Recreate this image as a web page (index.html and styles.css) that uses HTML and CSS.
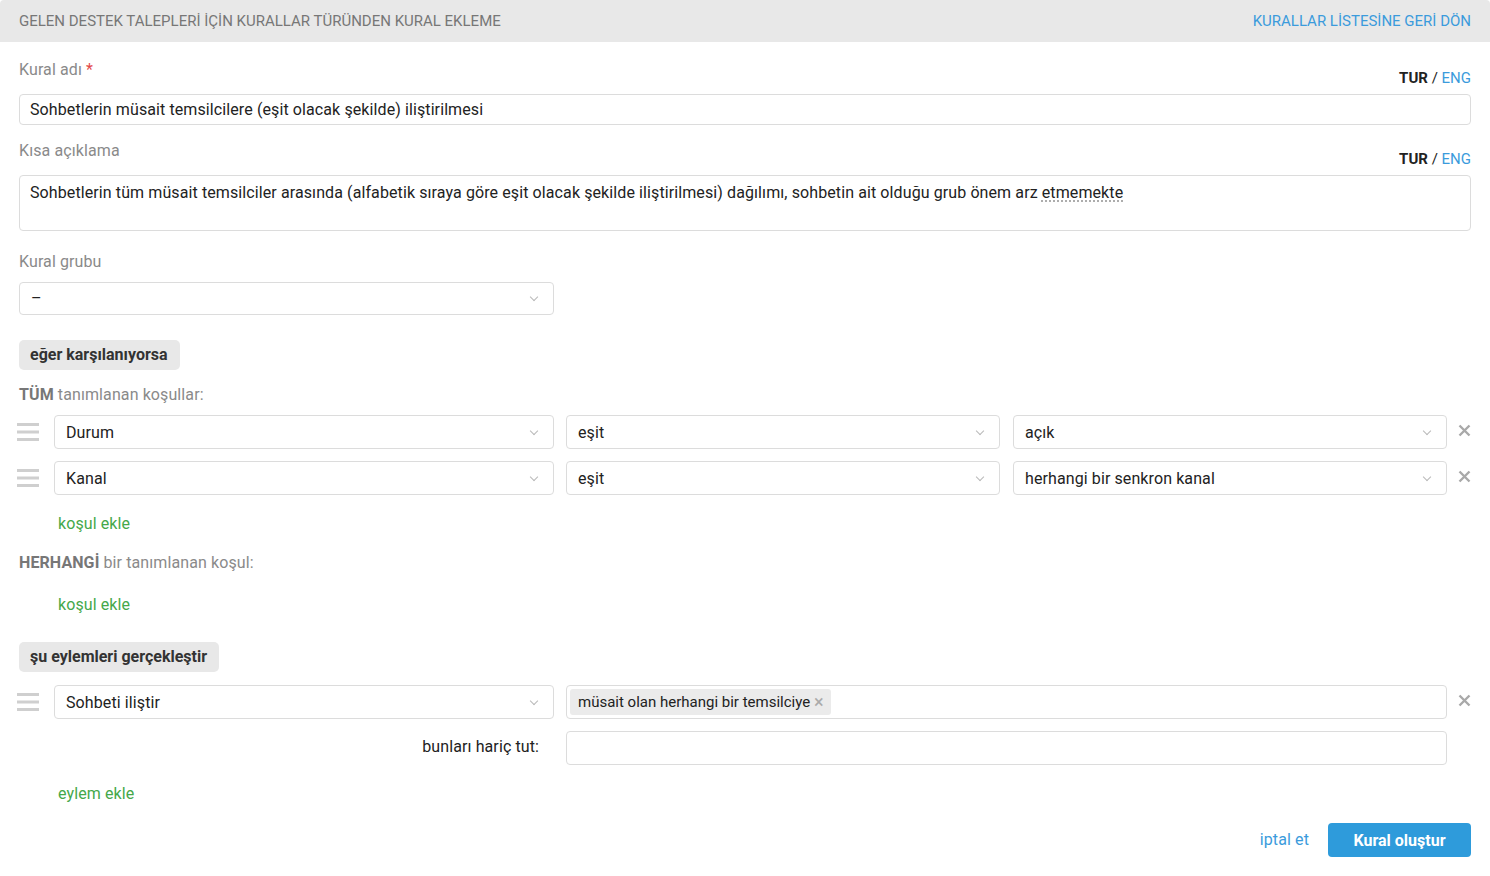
FILE: index.html
```html
<!DOCTYPE html>
<html lang="tr">
<head>
    <meta charset="UTF-8">
    <title>Kural ekleme</title>
    <link rel="stylesheet" href="styles.css">
</head>
<body>
    <div class="page">
        <div class="topbar">
            <span class="topbar-title">GELEN DESTEK TALEPLERİ İÇİN KURALLAR TÜRÜNDEN KURAL EKLEME</span>
            <a class="topbar-link" href="#">KURALLAR LİSTESİNE GERİ DÖN</a>
        </div>

        <div class="content">
            <div class="field first">
                <div class="label-row">
                    <label class="label">Kural adı <span class="req">*</span></label>
                    <span class="lang"><b>TUR</b> / <a href="#">ENG</a></span>
                </div>
                <div class="input">Sohbetlerin müsait temsilcilere (eşit olacak şekilde) iliştirilmesi</div>
            </div>

            <div class="field desc">
                <div class="label-row">
                    <label class="label">Kısa açıklama</label>
                    <span class="lang"><b>TUR</b> / <a href="#">ENG</a></span>
                </div>
                <div class="input textarea">Sohbetlerin tüm müsait temsilciler arasında (alfabetik sıraya göre eşit olacak şekilde iliştirilmesi) dağılımı, sohbetin ait olduğu grub önem arz <span class="spell">etmemekte</span></div>
            </div>

            <div class="field group">
                <label class="label">Kural grubu</label>
                <div class="select group-select"><span>–</span><i class="chev"></i></div>
            </div>

            <div class="section-tag">eğer karşılanıyorsa</div>
            <div class="cond-title"><b>TÜM</b> tanımlanan koşullar:</div>

            <div class="rule-row">
                <span class="handle"><svg width="22" height="18" viewBox="0 0 22 18"><rect y="0" width="22" height="3" fill="#cfcfcf"/><rect y="7.5" width="22" height="3" fill="#cfcfcf"/><rect y="15" width="22" height="3" fill="#cfcfcf"/></svg></span>
                <div class="select first-col"><span>Durum</span><i class="chev"></i></div>
                <div class="select flex"><span>eşit</span><i class="chev"></i></div>
                <div class="select flex"><span>açık</span><i class="chev"></i></div>
                <span class="remove"><svg width="13" height="13" viewBox="0 0 13 13"><path d="M1.5 1.5 L11.5 11.5 M11.5 1.5 L1.5 11.5" stroke="#a9a9a9" stroke-width="2.4"/></svg></span>
            </div>
            <div class="rule-row second">
                <span class="handle"><svg width="22" height="18" viewBox="0 0 22 18"><rect y="0" width="22" height="3" fill="#cfcfcf"/><rect y="7.5" width="22" height="3" fill="#cfcfcf"/><rect y="15" width="22" height="3" fill="#cfcfcf"/></svg></span>
                <div class="select first-col"><span>Kanal</span><i class="chev"></i></div>
                <div class="select flex"><span>eşit</span><i class="chev"></i></div>
                <div class="select flex"><span>herhangi bir senkron kanal</span><i class="chev"></i></div>
                <span class="remove"><svg width="13" height="13" viewBox="0 0 13 13"><path d="M1.5 1.5 L11.5 11.5 M11.5 1.5 L1.5 11.5" stroke="#a9a9a9" stroke-width="2.4"/></svg></span>
            </div>

            <a class="add-link" href="#">koşul ekle</a>
            <div class="cond-title any"><b>HERHANGİ</b> bir tanımlanan koşul:</div>
            <a class="add-link any-add" href="#">koşul ekle</a>

            <div class="section-tag actions">şu eylemleri gerçekleştir</div>

            <div class="rule-row action-row">
                <span class="handle"><svg width="22" height="18" viewBox="0 0 22 18"><rect y="0" width="22" height="3" fill="#cfcfcf"/><rect y="7.5" width="22" height="3" fill="#cfcfcf"/><rect y="15" width="22" height="3" fill="#cfcfcf"/></svg></span>
                <div class="select first-col"><span>Sohbeti iliştir</span><i class="chev"></i></div>
                <div class="tag-input flex">
                    <span class="tag">müsait olan herhangi bir temsilciye <span class="tag-x">×</span></span>
                </div>
                <span class="remove"><svg width="13" height="13" viewBox="0 0 13 13"><path d="M1.5 1.5 L11.5 11.5 M11.5 1.5 L1.5 11.5" stroke="#a9a9a9" stroke-width="2.4"/></svg></span>
            </div>
            <div class="rule-row exclude-row">
                <span class="exclude-label">bunları hariç tut:</span>
                <div class="tag-input flex"></div>
                <span class="remove"></span>
            </div>

            <a class="add-link action-add" href="#">eylem ekle</a>

            <div class="footer">
                <a class="cancel" href="#">iptal et</a>
                <button class="primary">Kural oluştur</button>
            </div>
        </div>
    </div>
</body>
</html>
```

FILE: styles.css
```css
body {
    margin: 0;
    font-family: Roboto, "Liberation Sans", Arial, sans-serif;
    background: #ffffff;
    color: #222;
    letter-spacing: 0.1px;
}
a {
    text-decoration: none;
}
.page {
    width: 1490px;
}
.topbar {
    height: 42px;
    background: #e8e8e8;
    border-radius: 4px 4px 0 0;
    display: flex;
    align-items: center;
    justify-content: space-between;
    padding: 0 19px;
    font-size: 15px;
    letter-spacing: 0;
}
.topbar-title {
    color: #777;
}
.topbar-link {
    color: #3b9bdc;
}
.content {
    padding: 0 19px;
}
.field {
    margin-top: 15px;
}
.field.first {
    margin-top: 18px;
}
.field.desc {
    margin-top: 16px;
}
.field.group {
    margin-top: 21px;
}
.label-row {
    display: flex;
    justify-content: space-between;
    height: 27px;
    margin-bottom: 7px;
}
.label {
    display: block;
    font-size: 16px;
    line-height: 20px;
    color: #8a8a8a;
}
.req {
    color: #e34a4a;
}
.lang {
    align-self: flex-end;
    font-size: 15px;
    line-height: 18px;
    color: #222;
    letter-spacing: 0;
}
.lang b {
    font-weight: 700;
}
.lang a {
    color: #3b9bdc;
}
.input {
    box-sizing: border-box;
    height: 31px;
    border: 1px solid #dcdcdc;
    border-radius: 4px;
    padding: 0 10px;
    font-size: 16px;
    line-height: 29px;
    color: #222;
}
.input.textarea {
    height: 56px;
    line-height: 20px;
    padding-top: 7px;
}
.spell {
    text-decoration: underline dotted #999;
    text-underline-offset: 3px;
}
.select {
    box-sizing: border-box;
    height: 34px;
    border: 1px solid #dcdcdc;
    border-radius: 4px;
    padding: 0 12px 0 11px;
    display: flex;
    align-items: center;
    justify-content: space-between;
    font-size: 16px;
    color: #222;
}
.group-select {
    margin-top: 10px;
    width: 535px;
    height: 33px;
}
.chev {
    width: 5px;
    height: 5px;
    border-right: 1px solid #b9b9b9;
    border-bottom: 1px solid #b9b9b9;
    transform: rotate(45deg);
    margin: -3px 4px 0 0;
}
.section-tag {
    display: inline-block;
    margin-top: 25px;
    height: 30px;
    line-height: 30px;
    padding: 0 12px 0 11px;
    background: #e8e8e8;
    border-radius: 5px;
    font-size: 16px;
    font-weight: 700;
    color: #333;
    letter-spacing: 0;
}
.section-tag.actions {
    margin-top: 27px;
}
.cond-title {
    margin-top: 15px;
    font-size: 16px;
    line-height: 20px;
    color: #8a8a8a;
}
.cond-title b {
    color: #777;
}
.cond-title.any {
    margin-top: 19px;
}
.rule-row {
    display: flex;
    align-items: center;
    margin-top: 10px;
    height: 34px;
}
.rule-row.second {
    margin-top: 12px;
}
.rule-row.action-row {
    margin-top: 13px;
}
.rule-row.exclude-row {
    margin-top: 12px;
}
.handle {
    width: 35px;
    flex: none;
    display: flex;
}
.handle svg {
    margin-left: -2px;
}
.first-col {
    width: 500px;
    flex: none;
    margin-right: 12px;
}
.flex {
    flex: 1;
}
.rule-row .select.flex + .select.flex {
    margin-left: 13px;
}
.remove {
    width: 24px;
    flex: none;
    display: flex;
    justify-content: flex-end;
    margin-top: -4px;
}
.tag-input {
    box-sizing: border-box;
    height: 34px;
    border: 1px solid #dcdcdc;
    border-radius: 4px;
    padding: 3px;
    display: flex;
    align-items: center;
}
.tag {
    background: #ebebeb;
    border-radius: 3px;
    height: 26px;
    line-height: 26px;
    padding: 0 8px;
    font-size: 15px;
    color: #222;
    letter-spacing: 0;
}
.tag-x {
    color: #aaa;
    font-size: 18px;
    vertical-align: -1px;
}
.exclude-label {
    width: 535px;
    flex: none;
    box-sizing: border-box;
    padding-right: 15px;
    margin-right: 12px;
    margin-top: -4px;
    text-align: right;
    font-size: 16px;
    color: #222;
}
.add-link {
    display: block;
    margin-top: 19px;
    margin-left: 39px;
    font-size: 16px;
    line-height: 20px;
    color: #45a84a;
}
.add-link.any-add {
    margin-top: 22px;
}
.footer {
    display: flex;
    justify-content: flex-end;
    align-items: center;
    gap: 19px;
    margin-top: 19px;
}
.cancel {
    font-size: 16px;
    color: #3b9bdc;
    margin-top: -2px;
}
.primary {
    height: 34px;
    width: 143px;
    border: none;
    border-radius: 4px;
    background: #2e9bdb;
    color: #fff;
    font-family: Roboto, "Liberation Sans", Arial, sans-serif;
    font-size: 16px;
    font-weight: 700;
}
```
